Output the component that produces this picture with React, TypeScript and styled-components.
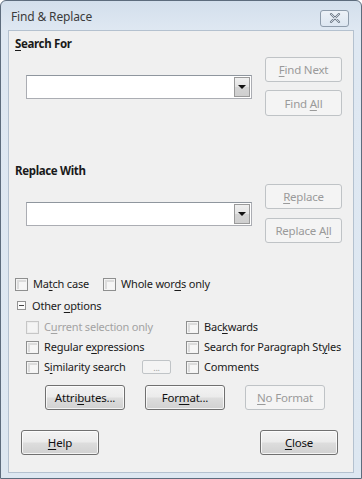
import React from "react";
import styled, { createGlobalStyle, css } from "styled-components";

const GlobalStyle = createGlobalStyle`
  html, body { margin: 0; padding: 0; background: #ffffff; }
  body { font-family: "Noto Sans", "Open Sans", sans-serif; font-size: 11px; letter-spacing: -0.2px; }
  * { box-sizing: border-box; }
`;

const Window = styled.div`
  width: 362px;
  height: 479px;
  border: 1px solid #5d6c7d;
  border-radius: 6px 6px 0 0;
  background: linear-gradient(180deg, #d3dfec 0px, #dfe8f2 30px, #dde7f1 100%);
  display: flex;
  flex-direction: column;
  padding: 0 7px 5px 7px;
`;

const TitleBar = styled.div`
  height: 29px;
  display: flex;
  align-items: center;
  justify-content: space-between;
  padding-left: 3px;
  padding-top: 2px;
`;

const Title = styled.span`
  color: #3b3b3b;
  font-size: 12px;
  letter-spacing: -0.15px;
`;

const CloseBox = styled.div`
  width: 29px;
  height: 17px;
  margin-right: 5px;
  margin-top: 3px;
  border: 1px solid #8e9cab;
  border-radius: 3px;
  background: linear-gradient(180deg, rgba(255,255,255,0.55), rgba(220,230,240,0.4));
  display: flex;
  align-items: center;
  justify-content: center;
`;

const Client = styled.div`
  flex: 1;
  border: 1px solid #b4c1cf;
  background: #f0f0f0;
  display: flex;
  flex-direction: column;
  color: #1a1a1a;
`;

const SectionLabel = styled.div<{ $top: number }>`
  font-weight: 700;
  font-size: 11.5px;
  line-height: 16px;
  height: 16px;
  padding-left: 6px;
  margin-top: ${(p) => p.$top}px;
  letter-spacing: -0.35px;
`;

const Mn = styled.span`
  text-decoration: underline;
  text-underline-offset: 2px;
`;

const FieldRow = styled.div<{ $top: number }>`
  display: flex;
  align-items: center;
  padding-left: 17px;
  margin-top: ${(p) => p.$top}px;
  gap: 13px;
`;

const Combo = styled.div`
  width: 226px;
  height: 24px;
  border: 1px solid #abadb3;
  border-top-color: #8f969e;
  background: #ffffff;
  display: flex;
  justify-content: flex-end;
  padding: 1px;
`;

const DropButton = styled.div`
  width: 16px;
  height: 100%;
  border: 1px solid #9a9a9a;
  background: linear-gradient(180deg, #f0f0f0 0%, #e3e3e3 50%, #d4d4d4 51%, #cfcfcf 100%);
  display: flex;
  align-items: center;
  justify-content: center;
`;

const Arrow = styled.div`
  width: 0;
  height: 0;
  border-left: 4px solid transparent;
  border-right: 4px solid transparent;
  border-top: 4px solid #111;
`;

const ButtonCol = styled.div<{ $gap: number }>`
  display: flex;
  flex-direction: column;
  gap: ${(p) => p.$gap}px;
`;

const Button = styled.div<{ $w: number; $disabled?: boolean; $h?: number }>`
  width: ${(p) => p.$w}px;
  height: ${(p) => p.$h ?? 25}px;
  border-radius: 3px;
  display: flex;
  align-items: center;
  justify-content: center;
  font-size: 11.5px;
  ${(p) =>
    p.$disabled
      ? css`
          border: 1px solid #bfc3c6;
          background: #f4f4f4;
          color: #9a9a9a;
        `
      : css`
          border: 1px solid #707070;
          background: linear-gradient(180deg, #f3f3f3 0%, #ebebeb 48%, #dddddd 52%, #d1d1d1 100%);
          color: #111;
          box-shadow: inset 0 0 0 1px rgba(255, 255, 255, 0.75);
        `}
`;

const CheckRow = styled.div<{ $top: number; $left: number; $gap?: number }>`
  display: flex;
  align-items: center;
  height: 16px;
  margin-top: ${(p) => p.$top}px;
  padding-left: ${(p) => p.$left}px;
  gap: ${(p) => p.$gap ?? 0}px;
`;

const CheckItem = styled.label<{ $disabled?: boolean; $w?: number }>`
  display: flex;
  align-items: center;
  gap: 5px;
  height: 16px;
  line-height: 16px;
  white-space: nowrap;
  color: ${(p) => (p.$disabled ? "#a3a3a3" : "#1a1a1a")};
  ${(p) => (p.$w ? `width: ${p.$w}px; flex: 0 0 ${p.$w}px;` : "")}
`;

const Box = styled.span<{ $disabled?: boolean }>`
  width: 13px;
  height: 13px;
  flex: 0 0 13px;
  border: 1px solid ${(p) => (p.$disabled ? "#c6c6c6" : "#8e8f8f")};
  background: ${(p) => (p.$disabled ? "#f4f4f4" : "#f6f6f6")};
  box-shadow: ${(p) =>
    p.$disabled
      ? "inset 0 0 0 1px #ececec"
      : "inset 0 0 0 1px #f4f4f4, inset 1px 1px 0 2px #dcdcdc"};
`;

const Minus = styled.span`
  width: 9px;
  height: 9px;
  flex: 0 0 9px;
  margin-left: 2px;
  margin-right: 1px;
  border: 1px solid #939393;
  background: #fbfbfb;
  display: flex;
  align-items: center;
  justify-content: center;
  &::after {
    content: "";
    width: 5px;
    height: 1px;
    background: #444;
  }
`;

const OptionGrid = styled.div`
  display: grid;
  grid-template-columns: 160px auto;
  grid-auto-rows: 16px;
  row-gap: 4px;
  padding-left: 17px;
  margin-top: 6px;
`;

const Cell = styled.div`
  display: flex;
  align-items: center;
`;

const DotsButton = styled.div`
  width: 29px;
  height: 14px;
  border: 1px solid #c0c4c7;
  border-radius: 2px;
  background: #f4f4f4;
  color: #a0a0a0;
  font-size: 9px;
  display: flex;
  align-items: center;
  justify-content: center;
  line-height: 1;
`;

const FormatRow = styled.div`
  display: flex;
  gap: 20px;
  padding-left: 36px;
  margin-top: 10px;
`;

const Footer = styled.div`
  display: flex;
  justify-content: space-between;
  padding: 0 15px 0 12px;
  margin-top: 20px;
`;

function Check({ label, disabled, w }: { label: React.ReactNode; disabled?: boolean; w?: number }) {
  return (
    <CheckItem $disabled={disabled} $w={w}>
      <Box $disabled={disabled} />
      <span>{label}</span>
    </CheckItem>
  );
}

export default function App() {
  return (
    <>
      <GlobalStyle />
      <Window>
        <TitleBar>
          <Title>Find &amp; Replace</Title>
          <CloseBox>
            <svg width="12" height="10" viewBox="0 0 12 10">
              <path d="M2 1 L10 9 M10 1 L2 9" stroke="#6f7b88" strokeWidth="2.2" strokeLinecap="round" />
              <path d="M2 1 L10 9 M10 1 L2 9" stroke="#e6ecf2" strokeWidth="0.8" strokeLinecap="round" />
            </svg>
          </CloseBox>
        </TitleBar>
        <Client>
          <SectionLabel $top={5}>
            <Mn>S</Mn>earch For
          </SectionLabel>
          <FieldRow $top={5}>
            <Combo>
              <DropButton>
                <Arrow />
              </DropButton>
            </Combo>
            <ButtonCol $gap={8}>
              <Button $w={77} $disabled>
                <span>
                  <Mn>F</Mn>ind Next
                </span>
              </Button>
              <Button $w={77} $disabled $h={26}>
                <span>
                  Find <Mn>A</Mn>ll
                </span>
              </Button>
            </ButtonCol>
          </FieldRow>
          <SectionLabel $top={47}>Replace With</SectionLabel>
          <FieldRow $top={5}>
            <Combo>
              <DropButton>
                <Arrow />
              </DropButton>
            </Combo>
            <ButtonCol $gap={9}>
              <Button $w={77} $disabled>
                <span>
                  <Mn>R</Mn>eplace
                </span>
              </Button>
              <Button $w={77} $disabled>
                <span>
                  Replace A<Mn>l</Mn>l
                </span>
              </Button>
            </ButtonCol>
          </FieldRow>
          <CheckRow $top={33} $left={6} $gap={14}>
            <Check
              label={
                <>
                  Ma<Mn>t</Mn>ch case
                </>
              }
            />
            <Check
              label={
                <>
                  Whole wor<Mn>d</Mn>s only
                </>
              }
            />
          </CheckRow>
          <CheckRow $top={5} $left={6} $gap={5}>
            <Minus />
            <span>
              Other <Mn>o</Mn>ptions
            </span>
          </CheckRow>
          <OptionGrid>
            <Cell>
              <Check
                disabled
                label={
                  <>
                    C<Mn>u</Mn>rrent selection only
                  </>
                }
              />
            </Cell>
            <Cell>
              <Check
                label={
                  <>
                    Bac<Mn>k</Mn>wards
                  </>
                }
              />
            </Cell>
            <Cell>
              <Check
                label={
                  <>
                    Regular e<Mn>x</Mn>pressions
                  </>
                }
              />
            </Cell>
            <Cell>
              <Check
                label={
                  <>
                    Search for Paragraph St<Mn>y</Mn>les
                  </>
                }
              />
            </Cell>
            <Cell>
              <Check
                w={116}
                label={
                  <>
                    S<Mn>i</Mn>milarity search
                  </>
                }
              />
              <DotsButton>...</DotsButton>
            </Cell>
            <Cell>
              <Check label="Comments" />
            </Cell>
          </OptionGrid>
          <FormatRow>
            <Button $w={80}>
              <span>
                Attri<Mn>b</Mn>utes...
              </span>
            </Button>
            <Button $w={80}>
              <span>
                For<Mn>m</Mn>at...
              </span>
            </Button>
            <Button $w={80} $disabled>
              <span>
                <Mn>N</Mn>o Format
              </span>
            </Button>
          </FormatRow>
          <Footer>
            <Button $w={78}>
              <span>
                <Mn>H</Mn>elp
              </span>
            </Button>
            <Button $w={78}>
              <span>
                <Mn>C</Mn>lose
              </span>
            </Button>
          </Footer>
        </Client>
      </Window>
    </>
  );
}
